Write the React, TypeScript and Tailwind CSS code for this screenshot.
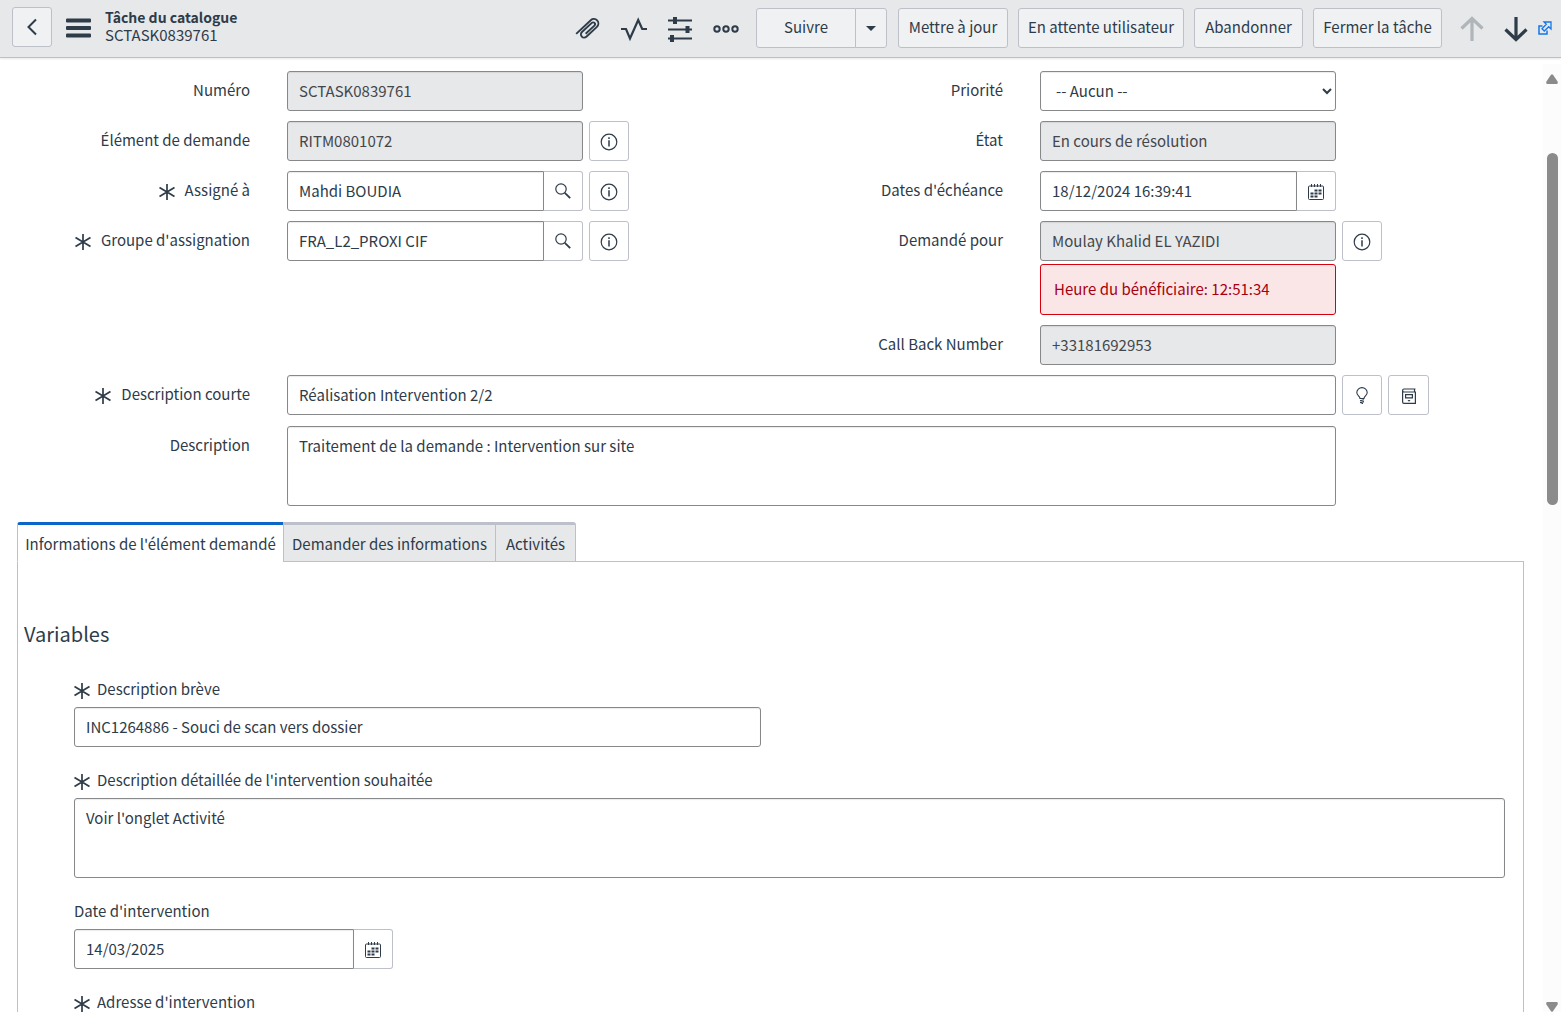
import type { ReactNode } from 'react';
import clsx from 'clsx';

const FIELD =
  'block w-full min-w-0 border border-[#87888a] px-[11px] outline-none shadow-[inset_0_1px_1px_rgba(0,0,0,0.08)]';
const ADDON =
  'flex h-10 shrink-0 items-center justify-center border border-[#bdc0c8] bg-white text-[#2e3b49]';
const HEADER_BUTTON =
  'h-10 shrink-0 whitespace-nowrap rounded-[3px] border border-[#bdc0c8] bg-[#f0f1f3] pb-[2px]';

export default function App() {
  return (
    <div className="flex h-screen flex-col overflow-hidden bg-white font-['Noto_Sans_CJK_SC',sans-serif] text-[15px] leading-5 text-[#2e3b49]">
      <FormHeader />
      <div className="flex min-h-0 flex-1">
        <main className="min-w-0 flex-1 overflow-hidden pt-[13px] pr-[19px] pl-[17px]">
          <TaskFields />
          <Tabs />
          <VariablesPanel />
        </main>
        <ScrollTrack />
      </div>
    </div>
  );
}

function FormHeader() {
  return (
    <header className="relative flex h-[58px] shrink-0 items-center border-b border-[#bdc0c4] bg-[#e6e8ea] pr-[9px] pb-[2px] pl-3 shadow-[0_1px_2px_rgba(0,0,0,0.1)]">
      <div className="flex shrink-0 items-center pb-[2px]">
        <button
          type="button"
          aria-label="Retour"
          className="flex h-10 w-10 items-center justify-center rounded-[3px] border border-[#bdc0c8] bg-[#f0f1f3]"
        >
          <svg width="12" height="18" viewBox="0 0 12 18" fill="none" stroke="currentColor" strokeWidth="2">
            <path d="M10 1.5 2.5 9l7.500 7.500" />
          </svg>
        </button>
        <button type="button" aria-label="Menu" className="ml-[14px] pt-[2px]">
          <svg width="25" height="20" viewBox="0 0 25 20" fill="currentColor">
            <rect y="0.500" width="25" height="4" rx="1" />
            <rect y="8" width="25" height="4" rx="1" />
            <rect y="15.500" width="25" height="4" rx="1" />
          </svg>
        </button>
        <h1 className="ml-[14px] flex flex-col pb-[2px] leading-[18px]">
          <span className="text-sm leading-[18px] font-bold">Tâche du catalogue</span>
          <span className="font-normal">SCTASK0839761</span>
        </h1>
      </div>

      <div className="ml-auto flex shrink-0 items-center gap-5 pt-[3px]">
        <IconButton label="Pièces jointes">
          <path
            d="M1 8.500h20a4.500 4.500 0 0 1 0 9H6.500a3.200 3.200 0 0 1 0-6.400H20a1.900 1.900 0 0 1 0 3.800H8"
            transform="rotate(-43 13 13)"
            strokeWidth="1.900"
          />
        </IconButton>
        <IconButton label="Flux d'activités">
          <path d="M0 13h5l4 9.500L17.200 4l4 9H26" strokeWidth="2.200" />
        </IconButton>
        <IconButton label="Personnaliser le formulaire">
          <path d="M1 4.500h24M1 13.500h24M1 22.500h24" strokeWidth="2" />
          <path d="M6 1h4v7H6zM18.500 10h4v7h-4zM3 19h4v7H3z" fill="currentColor" stroke="none" />
        </IconButton>
        <IconButton label="Plus d'options">
          <circle cx="4" cy="13" r="2.700" />
          <circle cx="13" cy="13" r="2.700" />
          <circle cx="22" cy="13" r="2.700" />
        </IconButton>
      </div>

      <div className="ml-[17px] flex shrink-0">
        <button type="button" className={clsx(HEADER_BUTTON, 'w-[100px] rounded-r-none')}>
          Suivre
        </button>
        <button
          type="button"
          aria-label="Options de suivi"
          className="-ml-px flex h-10 w-8 items-center justify-center rounded-r-[3px] border border-[#bdc0c8] bg-[#f0f1f3] pt-[2px]"
        >
          <svg width="10" height="5" viewBox="0 0 10 5" fill="currentColor">
            <path d="M0 0h10L5 5z" />
          </svg>
        </button>
      </div>
      <div className="ml-[11px] flex shrink-0 gap-[10px]">
        <button type="button" className={clsx(HEADER_BUTTON, 'w-[110px]')}>Mettre à jour</button>
        <button type="button" className={clsx(HEADER_BUTTON, 'w-[166px]')}>En attente utilisateur</button>
        <button type="button" className={clsx(HEADER_BUTTON, 'w-[109px]')}>Abandonner</button>
        <button type="button" className={clsx(HEADER_BUTTON, 'w-[129px]')}>Fermer la tâche</button>
      </div>
      <div className="ml-[17px] flex shrink-0 items-center gap-[18px] pt-[3px]">
        <IconButton label="Enregistrement précédent" disabled>
          <path d="M13 25V2.500M2.500 12.500 13 2.500l10.500 10" strokeWidth="3.200" />
        </IconButton>
        <IconButton label="Enregistrement suivant">
          <path d="M13 1v22.500M2.500 13.500 13 23.500l10.500-10" strokeWidth="3.200" />
        </IconButton>
      </div>
      <a href="#ouvrir" aria-label="Ouvrir dans une nouvelle fenêtre" className="ml-[9px] shrink-0 text-[#1477ea]">
        <svg width="14" height="14" viewBox="0 0 14 14" fill="none" stroke="currentColor" strokeWidth="1.500">
          <path d="M4.500 5H1v8h8V9.500" />
          <path d="M6 1h7v7l-2.300-2.300L6.300 10 4 7.700l4.300-4.400z" strokeWidth="1.300" />
        </svg>
      </a>
    </header>
  );
}

interface IconButtonProps {
  label: string;
  disabled?: boolean;
  children: ReactNode;
}

function IconButton({ label, disabled, children }: IconButtonProps) {
  return (
    <button type="button" aria-label={label} disabled={disabled} className="shrink-0 disabled:text-[#b0b5ba]">
      <svg width="26" height="26" viewBox="0 0 26 26" fill="none" stroke="currentColor" strokeWidth="2">
        {children}
      </svg>
    </button>
  );
}

function TaskFields() {
  return (
    <form className="flex flex-col gap-[10px] pr-px">
      <div className="grid grid-cols-2">
        <div className="flex flex-col gap-[10px]">
          <Row id="number" label="Numéro">
            <TextField id="number" value="SCTASK0839761" readOnly />
          </Row>
          <Row id="request_item" label="Élément de demande" extra={<InfoButton />}>
            <TextField id="request_item" value="RITM0801072" readOnly />
          </Row>
          <Row id="assigned_to" label="Assigné à" required extra={<InfoButton />}>
            <TextField id="assigned_to" value="Mahdi BOUDIA" addon={<SearchIcon />} addonLabel="Rechercher" />
          </Row>
          <Row id="assignment_group" label="Groupe d'assignation" required extra={<InfoButton />}>
            <TextField id="assignment_group" value="FRA_L2_PROXI CIF" addon={<SearchIcon />} addonLabel="Rechercher" />
          </Row>
        </div>
        <div className="flex flex-col gap-[10px]">
          <Row id="priority" label="Priorité">
            <select id="priority" className={clsx(FIELD, 'h-10 rounded-[3px] bg-white pr-0 pb-px')}>
              <option>-- Aucun --</option>
            </select>
          </Row>
          <Row id="state" label="État">
            <TextField id="state" value="En cours de résolution" readOnly />
          </Row>
          <Row id="due_date" label="Dates d'échéance">
            <TextField id="due_date" value="18/12/2024 16:39:41" addon={<CalendarIcon />} addonLabel="Choisir une date" />
          </Row>
          <Row id="requested_for" label="Demandé pour" extra={<InfoButton />}>
            <TextField id="requested_for" value="Moulay Khalid EL YAZIDI" readOnly />
            <div className="mt-[3px] flex h-[51px] items-center rounded-[3px] border border-[#d6000e] bg-[#fae6e7] px-[13px] pb-px text-[#a80010]">
              Heure du bénéficiaire: 12:51:34
            </div>
          </Row>
          <Row id="call_back" label="Call Back Number">
            <TextField id="call_back" value="+33181692953" readOnly />
          </Row>
        </div>
      </div>
      <div className="flex flex-col gap-[11px]">
        <Row
          id="short_description"
          label="Description courte"
          required
          extra={
            <>
              <button type="button" aria-label="Suggestions" className={clsx(ADDON, 'w-10 rounded-[3px]')}>
                <BulbIcon />
              </button>
              <button type="button" aria-label="Base de connaissances" className={clsx(ADDON, 'w-[41px] rounded-[3px]')}>
                <BookIcon />
              </button>
            </>
          }
        >
          <TextField id="short_description" value="Réalisation Intervention 2/2" />
        </Row>
        <Row id="description" label="Description">
          <TextBox id="description" value="Traitement de la demande : Intervention sur site" />
        </Row>
      </div>
    </form>
  );
}

interface RowProps {
  id: string;
  label: string;
  required?: boolean;
  extra?: ReactNode;
  children: ReactNode;
}

function Row({ id, label, required, extra, children }: RowProps) {
  return (
    <div className="grid grid-cols-[233px_minmax(0,1fr)_181px]">
      <label htmlFor={id} className="flex h-[38px] items-center justify-end gap-[10px] whitespace-nowrap">
        {required && <RequiredMark />}
        {label}
      </label>
      <div className="mr-[6px] ml-[37px]">{children}</div>
      <div className="flex gap-[6px]">{extra}</div>
    </div>
  );
}

interface TextFieldProps {
  id: string;
  value: string;
  readOnly?: boolean;
  addon?: ReactNode;
  addonLabel?: string;
}

function TextField({ id, value, readOnly, addon, addonLabel }: TextFieldProps) {
  return (
    <div className="flex">
      <input
        id={id}
        type="text"
        defaultValue={value}
        readOnly={readOnly}
        className={clsx(
          FIELD,
          'h-10 pb-[2px]',
          addon ? 'rounded-l-[3px]' : 'rounded-[3px]',
          readOnly ? 'bg-[#e6e8ea] text-[#43474c]' : 'bg-white',
        )}
      />
      {addon && (
        <button type="button" aria-label={addonLabel} className={clsx(ADDON, 'w-[39px] rounded-r-[3px] border-l-0')}>
          {addon}
        </button>
      )}
    </div>
  );
}

function TextBox({ id, value }: { id: string; value: string }) {
  return <textarea id={id} defaultValue={value} className={clsx(FIELD, 'h-20 resize-none rounded-[3px] bg-white py-[9px]')} />;
}

function Tabs() {
  return (
    <div role="tablist" className="relative -mb-px mt-4 flex h-10">
      <button
        type="button"
        role="tab"
        aria-selected="true"
        className="w-[266px] rounded-tl-[3px] border-t-[3px] border-b border-l border-t-[#0a66c9] border-b-white border-l-[#bdc0c8] bg-white pt-[2px] whitespace-nowrap"
      >
        Informations de l'élément demandé
      </button>
      <button
        type="button"
        role="tab"
        aria-selected="false"
        className="w-[212px] border-t-[3px] border-b border-l border-[#bdc0c8] bg-[#e6e8ea] pt-[2px] whitespace-nowrap"
      >
        Demander des informations
      </button>
      <button
        type="button"
        role="tab"
        aria-selected="false"
        className="w-[81px] rounded-tr-[3px] border-x border-t-[3px] border-b border-[#bdc0c8] bg-[#e6e8ea] pt-[2px] whitespace-nowrap"
      >
        Activités
      </button>
    </div>
  );
}

function VariablesPanel() {
  return (
    <section className="border border-[#bdc0c8] pt-[60px] pr-[18px] pb-10 pl-[6px]">
      <h2 className="text-xl leading-6">Variables</h2>
      <div className="mt-[31px] ml-[50px] flex flex-col gap-[21px]">
        <Variable id="var_short" label="Description brève" required>
          <div className="w-[48%]">
            <TextField id="var_short" value="INC1264886 - Souci de scan vers dossier" />
          </div>
        </Variable>
        <Variable id="var_detail" label="Description détaillée de l'intervention souhaitée" required>
          <TextBox id="var_detail" value="Voir l'onglet Activité" />
        </Variable>
        <Variable id="var_date" label="Date d'intervention">
          <div className="w-[319px]">
            <TextField id="var_date" value="14/03/2025" addon={<CalendarIcon />} addonLabel="Choisir une date" />
          </div>
        </Variable>
        <Variable id="var_address" label="Adresse d'intervention" required>
          <TextField id="var_address" value="" />
        </Variable>
      </div>
    </section>
  );
}

function Variable({ id, label, required, children }: Omit<RowProps, 'extra'>) {
  return (
    <div>
      <label htmlFor={id} className="mb-[6px] flex h-6 items-center gap-[7px]">
        {required && <RequiredMark />}
        {label}
      </label>
      {children}
    </div>
  );
}

/** Decorative track next to the form: arrows and thumb. */
function ScrollTrack() {
  return (
    <div aria-hidden="true" className="mt-[6px] flex w-[18px] shrink-0 flex-col items-center bg-[#fcfcfc] pt-[10px] text-[#8b8b8b]">
      <svg width="12" height="10" viewBox="0 0 12 10" fill="currentColor" className="shrink-0">
        <path d="M5 .8q1-1 2 0l4.600 6.700Q12.300 10 10.500 10h-9Q-.3 10 .4 7.500z" />
      </svg>
      <div className="mt-[69px] h-3/8 w-[11px] rounded-full bg-[#8b8b8b]" />
      <svg width="12" height="10" viewBox="0 0 12 10" fill="currentColor" className="mt-auto shrink-0">
        <path d="M5 9.200q1 1 2 0l4.600-6.700Q12.300 0 10.500 0h-9Q-.3 0 .4 2.500z" />
      </svg>
    </div>
  );
}

function InfoButton() {
  return (
    <button type="button" aria-label="Aperçu" className={clsx(ADDON, 'w-10 rounded-[3px] pt-[2px]')}>
      <svg width="18" height="18" viewBox="0 0 18 18" fill="none" stroke="currentColor" strokeWidth="1.200">
        <circle cx="9" cy="9" r="7.800" />
        <path d="M9 7.300v6.200M9 4.300v1.700" strokeWidth="1.500" />
      </svg>
    </button>
  );
}

function RequiredMark() {
  return (
    <svg
      width="16"
      height="16"
      viewBox="0 0 16 16"
      fill="none"
      stroke="currentColor"
      strokeWidth="1.700"
      role="img"
      aria-label="Obligatoire"
      className="mt-[3px] shrink-0"
    >
      <path d="M8 0v16M.5 3.500l15 9M.5 12.500l15-9" />
    </svg>
  );
}

function SearchIcon() {
  return (
    <svg width="16" height="16" viewBox="0 0 16 16" fill="none" stroke="currentColor" strokeWidth="1.200">
      <circle cx="6" cy="6" r="5.200" />
      <path d="m9.800 9.800 5.400 5.400" strokeWidth="1.800" />
    </svg>
  );
}

function CalendarIcon() {
  return (
    <svg width="16" height="16" viewBox="0 0 16 16" fill="none" stroke="currentColor" className="mt-[2px]">
      <rect x="0.500" y="2" width="15" height="13.500" rx="1" />
      <path d="M3.500 0v3M6.500 0v3M9.500 0v3M12.500 0v3" />
      <path d="M6.500 6.500h8M2.500 9.500h11.500M2.500 12.500h7" strokeWidth="2" strokeDasharray="3 1" />
    </svg>
  );
}

function BulbIcon() {
  return (
    <svg width="12" height="17" viewBox="0 0 12 17" fill="none" stroke="currentColor" strokeWidth="1.100">
      <path d="M4 11.500C4 9 .8 8.500.8 5.500a5.200 4.900 0 0 1 10.400 0C11.200 8.500 8 9 8 11.500z" />
      <path d="m4 13.800 4-1M4 15.600l4-1M5.500 16.500h1.500" />
    </svg>
  );
}

function BookIcon() {
  return (
    <svg width="14" height="16" viewBox="0 0 14 16" fill="none" stroke="currentColor" strokeWidth="1.200" className="mt-[2px]">
      <path d="M13.500 1H2Q.6 1 .6 2.500V14q0 1.400 1.400 1.400h11.400V4H2Q.6 4 .6 2.500M12.500 1v3" />
      <path d="M3.600 6.600h6.800v3.200H3.600z" />
      <path d="M5.500 12h3L7 13.800z" fill="currentColor" stroke="none" />
    </svg>
  );
}
